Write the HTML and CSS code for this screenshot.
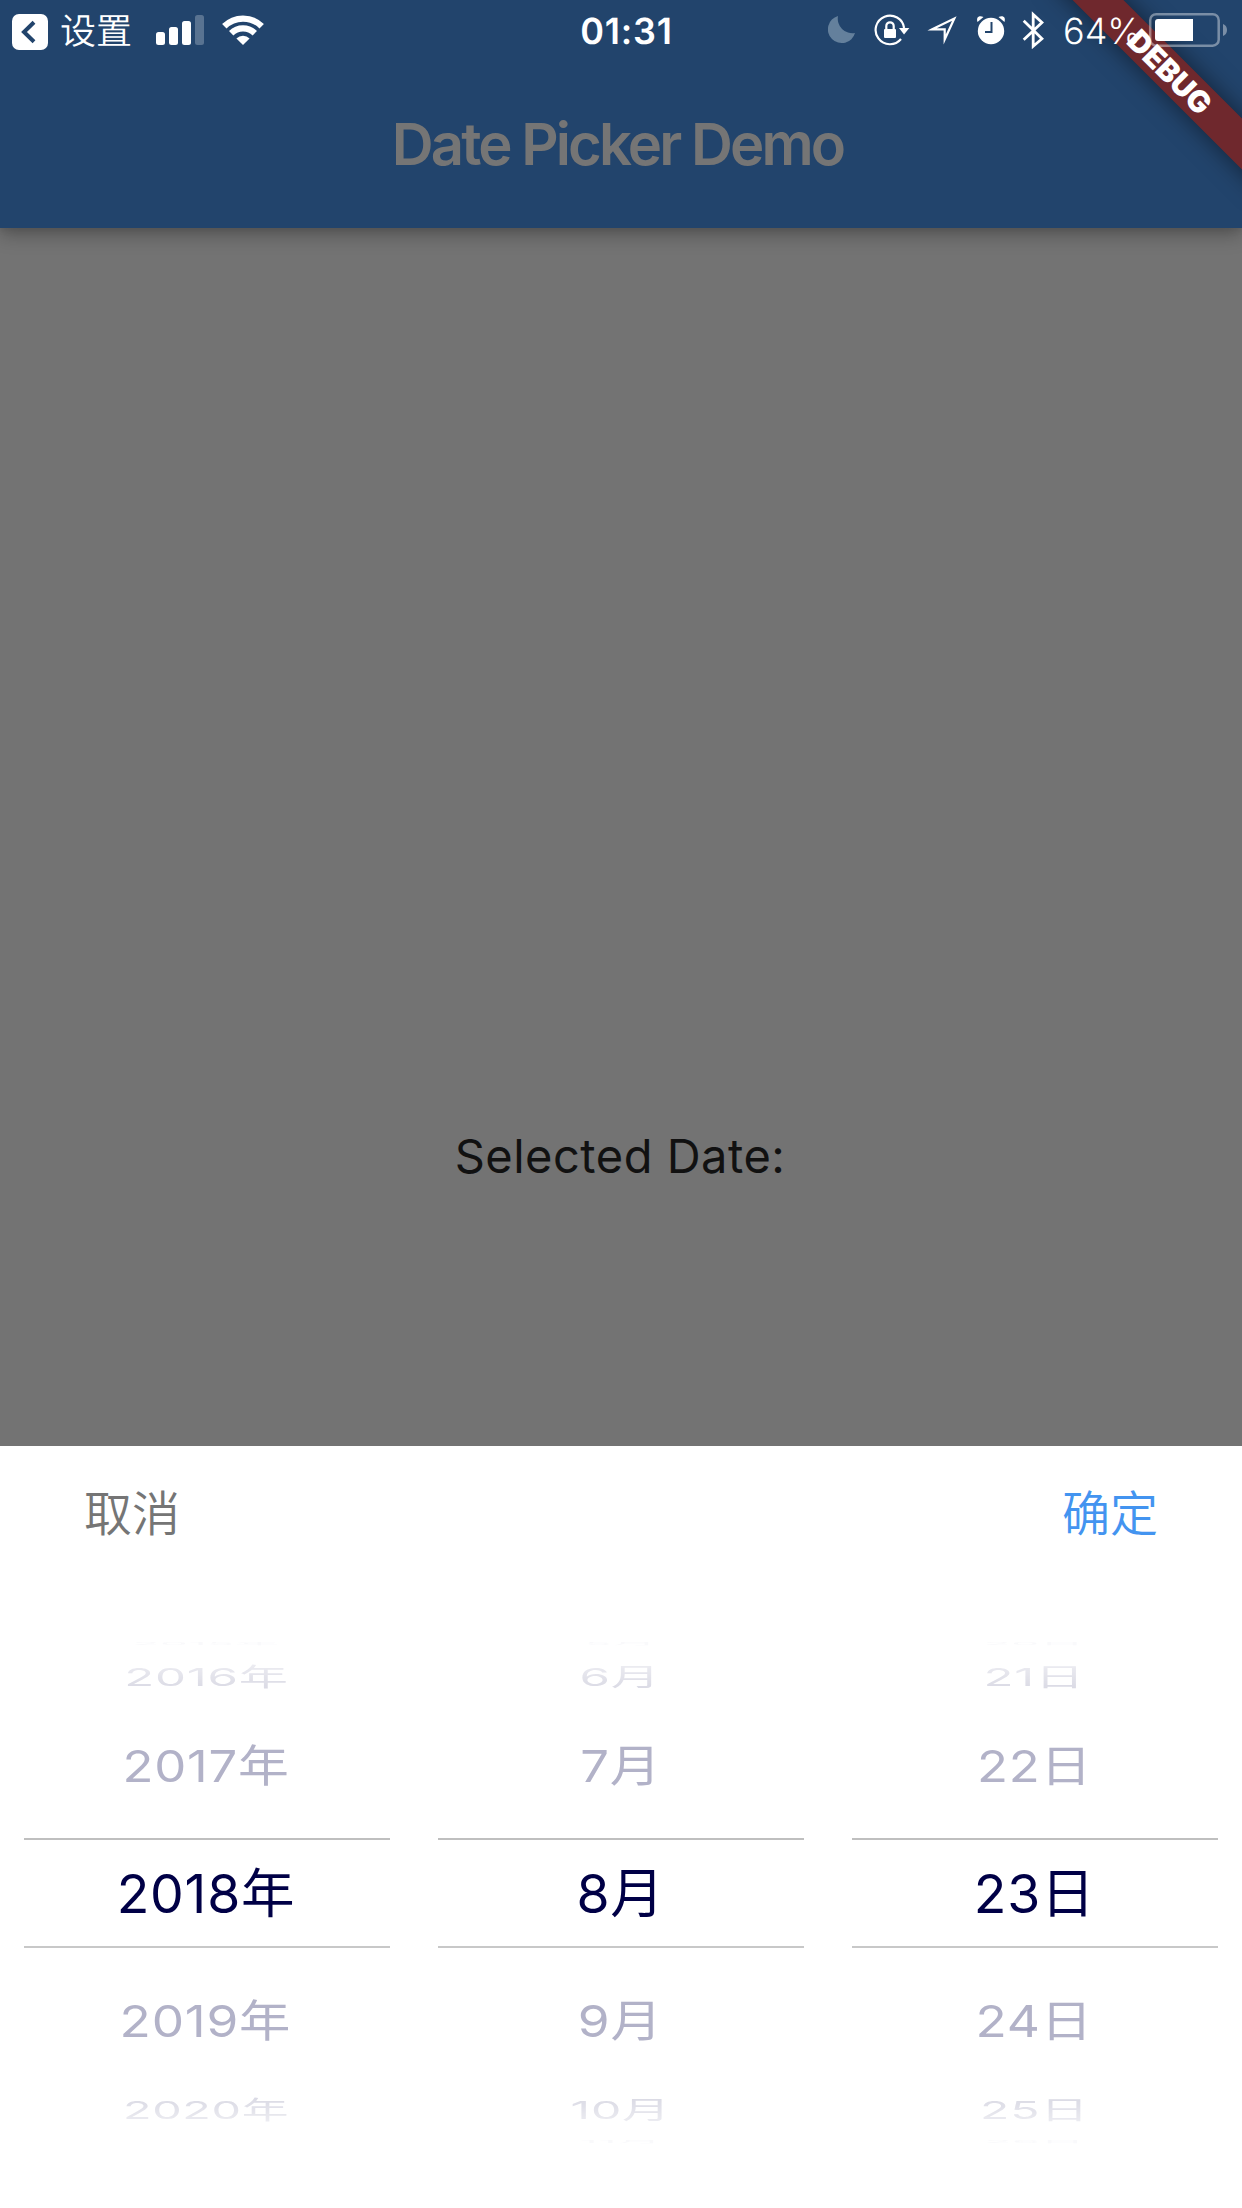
FILE: index.html
```html
<!DOCTYPE html>
<html lang="zh-CN">
<head>
<meta charset="utf-8">
<title>Date Picker Demo</title>
<link rel="stylesheet" href="styles.css">
</head>
<body>
<div class="screen">
  <header class="app-bar">
    <div class="status-bar">
      <div class="status-left">
        <svg class="back" width="36" height="36" viewBox="12 14 36 36"><rect x="12" y="14" width="36" height="36" rx="7" fill="#fff"/><path d="M34 22.3L24 32L34 41.7" fill="none" stroke="#22446c" stroke-width="4"/></svg>
        <span class="back-label">设置</span>
        <svg class="signal" width="48" height="30" viewBox="156 15 48 30" fill="#fff"><rect x="156" y="32" width="9" height="13" rx="2.5"/><rect x="169" y="27" width="9" height="18" rx="2.5"/><rect x="182" y="21" width="9" height="24" rx="2.5"/><rect x="195" y="15" width="9" height="30" rx="2.5" opacity=".25"/></svg>
        <svg class="wifi" width="44" height="32" viewBox="221 14 44 32"><path d="M224.3 26.3A26.4 26.4 0 0 1 261.7 26.3M231.2 33.2A16.7 16.7 0 0 1 254.8 33.2" fill="none" stroke="#fff" stroke-width="6.2"/><path d="M243 45L236.4 38.4A9.4 9.4 0 0 1 249.6 38.4Z" fill="#fff"/></svg>
      </div>
      <div class="clock">01:31</div>
      <div class="status-right">
        <svg width="28" height="36" viewBox="828 12 28 36"><path d="M838 16A13.8 13.8 0 1 0 855 33A14.6 14.6 0 0 1 838 16Z" fill="#64809c"/></svg>
        <svg class="lock" width="36" height="36" viewBox="874 12 36 36"><path d="M904.1 28A14.3 14.3 0 1 0 901 39" fill="none" stroke="#fff" stroke-width="2.2"/><path d="M899 28H909.3L904 34.5Z" fill="#fff"/><rect x="884" y="29" width="12" height="9" rx="1" fill="#fff"/><path d="M886.3 30V26A3.7 3.7 0 0 1 893.7 26V30" fill="none" stroke="#fff" stroke-width="2.2"/></svg>
        <svg class="location" width="32" height="36" viewBox="926 12 32 36"><path d="M932.2 29.3L954.3 18.5L944.7 39.5V29.3Z" fill="none" stroke="#fff" stroke-width="2.2" stroke-miterlimit="10"/></svg>
        <svg class="alarm" width="30" height="36" viewBox="976 12 30 36"><circle cx="991" cy="31" r="13.2" fill="#fff"/><path d="M977.5 22C976 17 979 15 983.5 17ZM1004.500 22C1006 17 1003 15 998.500 17Z" fill="#fff"/><path d="M991.500 22V32H985" fill="none" stroke="#22446c" stroke-width="2"/></svg>
        <svg class="bluetooth" width="22" height="38" viewBox="1022 11 22 38"><path d="M1023.700 20.800L1042 38.700L1033.200 46.200V14.500L1042 22.500L1023.700 39.700" fill="none" stroke="#fff" stroke-width="2.800"/></svg>
        <span class="percent">64%</span>
        <svg class="battery" width="80" height="36" viewBox="1148 12 80 36"><rect x="1150.200" y="14.200" width="68.500" height="31.500" rx="6" fill="none" stroke="#fff" stroke-opacity=".4" stroke-width="2.500"/><path d="M1158 19H1193V41H1158Q1155 41 1155 38V22Q1155 19 1158 19Z" fill="#fff"/><path d="M1223 24Q1227 25.500 1227 30T1223 36Z" fill="#fff" opacity=".4"/></svg>
      </div>
    </div>
    <h1 class="title">Date Picker Demo</h1>
  </header>
  <main class="content"><p class="selected">Selected Date:</p></main>
  <section class="sheet">
    <div class="actions"><span class="cancel">取消</span><span class="confirm">确定</span></div>
    <div class="wheels">
      <div class="wheel year">
        <div class="item edge"><span>2015年</span></div>
        <div class="item far up"><span>2016年</span></div>
        <div class="item near up"><span>2017年</span></div>
        <div class="item current"><span>2018年</span></div>
        <div class="item near"><span>2019年</span></div>
        <div class="item far"><span>2020年</span></div>
      </div>
      <div class="wheel month">
        <div class="item edge"><span>5月</span></div>
        <div class="item far up"><span>6月</span></div>
        <div class="item near up"><span>7月</span></div>
        <div class="item current"><span>8月</span></div>
        <div class="item near"><span>9月</span></div>
        <div class="item far"><span>10月</span></div>
        <div class="item edge"><span>11月</span></div>
      </div>
      <div class="wheel day">
        <div class="item edge"><span>20日</span></div>
        <div class="item far up"><span>21日</span></div>
        <div class="item near up"><span>22日</span></div>
        <div class="item current"><span>23日</span></div>
        <div class="item near"><span>24日</span></div>
        <div class="item far"><span>25日</span></div>
        <div class="item edge"><span>26日</span></div>
      </div>
    </div>
  </section>
  <div class="banner-corner"><div class="banner">DEBUG</div></div>
</div>
</body>
</html>
```
FILE: styles.css
```css
* { box-sizing: border-box; }
body { margin: 0; }
.screen {
  position: relative;
  display: flex;
  flex-direction: column;
  width: 1242px;
  height: 2208px;
  overflow: hidden;
  background: #737373;
  font-family: Inter, "Noto Sans CJK SC", sans-serif;
}
svg { display: block; flex: none; }
.app-bar {
  height: 228px;
  background: #22446c;
  box-shadow: 0 6px 18px rgba(0, 0, 0, .3), 0 3px 6px rgba(0, 0, 0, .06);
}
.status-bar {
  position: relative;
  z-index: 2;
  display: grid;
  grid-template-columns: 560px 132px 1fr;
  grid-template-rows: 60px;
  height: 60px;
  color: #fff;
  font-size: 35px;
  line-height: 56px;
  text-rendering: geometricPrecision;
}
.status-left, .status-right { display: flex; align-items: center; }
.status-left { padding-left: 12px; }
.back { margin-top: 4px; }
.back-label {
  width: 74px;
  margin: 0 0 2px 12px;
  font-family: "Noto Sans CJK SC", sans-serif;
  font-size: 36px;
  font-weight: 350;
}
.signal { margin-left: 22px; }
.wifi { margin-left: 17px; }
.clock { padding: 3px 0 0 1px; text-align: center; font-size: 36px; font-weight: 600; letter-spacing: .8px; }
.status-right { padding-left: 136px; }
.lock { margin-left: 18px; }
.location { margin-left: 16px; }
.alarm { margin-left: 18px; }
.bluetooth { margin-left: 16px; }
.percent { width: 85px; margin: 2px 0 0 19px; font-size: 36px; font-weight: 350; }
.title {
  margin: 0;
  padding: 49px 7px 0 0;
  text-align: center;
  font-size: 58px;
  line-height: 70px;
  font-weight: 560;
  letter-spacing: -2.9px;
  color: #757575;
}
.content { height: 1218px; padding-top: 899px; }
.selected {
  margin: 0;
  padding-right: 2px;
  text-align: center;
  font-size: 47px;
  line-height: 58px;
  letter-spacing: .5px;
  color: #111;
}
.sheet { flex: 1; background: #fff; }
.actions {
  display: flex;
  justify-content: space-between;
  align-items: center;
  height: 132px;
  padding: 0 84px 4px;
  font-family: "Noto Sans CJK SC", sans-serif;
  font-size: 48px;
  font-weight: 350;
}
.cancel { color: #757575; }
.confirm { color: #4394f0; }
.wheels {
  display: grid;
  grid-template-columns: repeat(3, 366px);
  gap: 48px;
  padding: 62px 24px 0;
}
.wheel { display: flex; flex-direction: column; }
.item {
  display: flex;
  align-items: center;
  justify-content: center;
  padding-right: 2px;
  font-size: 53.5px;
  font-weight: 380;
  letter-spacing: .8px;
  white-space: nowrap;
  color: #000046;
}
.item span { flex: none; line-height: 60px; }
.current { height: 110px; padding-top: 2px; border-top: 2px solid #bfbfbf; border-bottom: 2px solid #c8c8c8; }
.near { height: 120px; margin-top: 13px; color: #b2b2c8; }
.near.up { margin: 0 0 12px; }
.near span { transform: scale(.96, .83); }
.near.up span { transform: scale(.95, .83); }
.far {
  height: 57px;
  color: #d8d8e3;
  -webkit-mask-image: linear-gradient(to bottom, #000 25%, rgba(0, 0, 0, .45) 75%);
  mask-image: linear-gradient(to bottom, #000 25%, rgba(0, 0, 0, .45) 75%);
}
.far.up {
  height: 58px;
  -webkit-mask-image: linear-gradient(to top, #000 25%, rgba(0, 0, 0, .45) 75%);
  mask-image: linear-gradient(to top, #000 25%, rgba(0, 0, 0, .45) 75%);
}
.far span { transform: scale(.9, .46); }
.far.up span { transform: scale(.92, .46); }
.year .far:not(.up) span { transform: scale(.875, .46); }
.edge { height: 8px; color: #f9f9fb; }
.edge span { transform: scale(.83, .06); }
.year .near:not(.up) { padding-right: 4px; }
.month .item, .day .item { padding-right: 1px; }
.banner-corner {
  position: absolute;
  top: 0;
  right: 0;
  width: 260px;
  height: 228px;
  overflow: hidden;
}
.banner {
  position: absolute;
  left: 38px;
  top: 54px;
  width: 300px;
  height: 36px;
  background: #6f282d;
  box-shadow: 0 0 24px rgba(0, 0, 0, .5);
  color: #fff;
  font-size: 30px;
  font-weight: 900;
  line-height: 36px;
  text-align: center;
  transform: rotate(45deg);
}
```
